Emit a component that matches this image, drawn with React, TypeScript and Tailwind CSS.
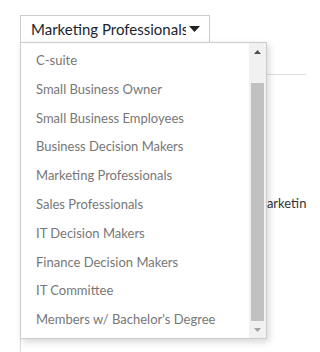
import { useState } from 'react'

const AUDIENCES = [
  'C-suite',
  'Small Business Owner',
  'Small Business Employees',
  'Business Decision Makers',
  'Marketing Professionals',
  'Sales Professionals',
  'IT Decision Makers',
  'Finance Decision Makers',
  'IT Committee',
  "Members w/ Bachelor's Degree",
]

export default function App() {
  const [selected, setSelected] = useState('Marketing Professionals')
  const [open, setOpen] = useState(true)

  return (
    <div
      className="relative w-[306px] h-[352px] overflow-hidden bg-white"
      style={{ fontFamily: 'Lato, "Open Sans", sans-serif' }}
    >
      <div className="pt-[15px] pl-[20px]">
        {/* Select trigger */}
        <button
          onClick={() => setOpen(o => !o)}
          className="flex items-center w-[190px] h-[28px] border border-[#cccccc] bg-white pl-[10px] pr-[9px] text-left"
        >
          <span className="flex-1 overflow-hidden whitespace-nowrap text-[15px] text-[#1b2430] leading-[26px]">
            {selected}
          </span>
          <svg width="11" height="6" viewBox="0 0 11 6" className="ml-[3px] shrink-0">
            <path d="M0 0 H11 L5.5 6 Z" fill="#222" />
          </svg>
        </button>

        {/* Content behind the menu */}
        <div className="mt-[31px] h-[400px] border-t border-l border-[#dddddd]">
          <div className="pt-[119px] pl-[234px] whitespace-nowrap text-[13px] text-[#333]">
            Marketing Professionals
          </div>
        </div>
      </div>

      {/* Dropdown menu */}
      {open && (
        <div className="absolute left-[20px] top-[42px] w-[247px] h-[297px] flex bg-white border border-[#cccccc] shadow-[2px_3px_7px_rgba(0,0,0,0.16)]">
          <ul className="flex-1 pt-[3px]">
            {AUDIENCES.map(a => (
              <li
                key={a}
                onClick={() => { setSelected(a); setOpen(false) }}
                className="h-[28.8px] pl-[15px] text-[13px] leading-[28.8px] text-[#777777] whitespace-nowrap cursor-pointer"
              >
                {a}
              </li>
            ))}
          </ul>

          {/* Scrollbar */}
          <div className="w-[17px] flex flex-col bg-[#f1f1f1]">
            <div className="h-[17px] flex items-center justify-center">
              <svg width="7" height="4" viewBox="0 0 7 4">
                <path d="M3.5 0 L7 4 H0 Z" fill="#505050" />
              </svg>
            </div>
            <div className="flex-1 flex flex-col justify-end">
              <div className="mx-[2px] h-[238px] bg-[#c1c1c1]" />
            </div>
            <div className="h-[17px] flex items-center justify-center">
              <svg width="7" height="4" viewBox="0 0 7 4">
                <path d="M0 0 H7 L3.5 4 Z" fill="#a3a3a3" />
              </svg>
            </div>
          </div>
        </div>
      )}
    </div>
  )
}
